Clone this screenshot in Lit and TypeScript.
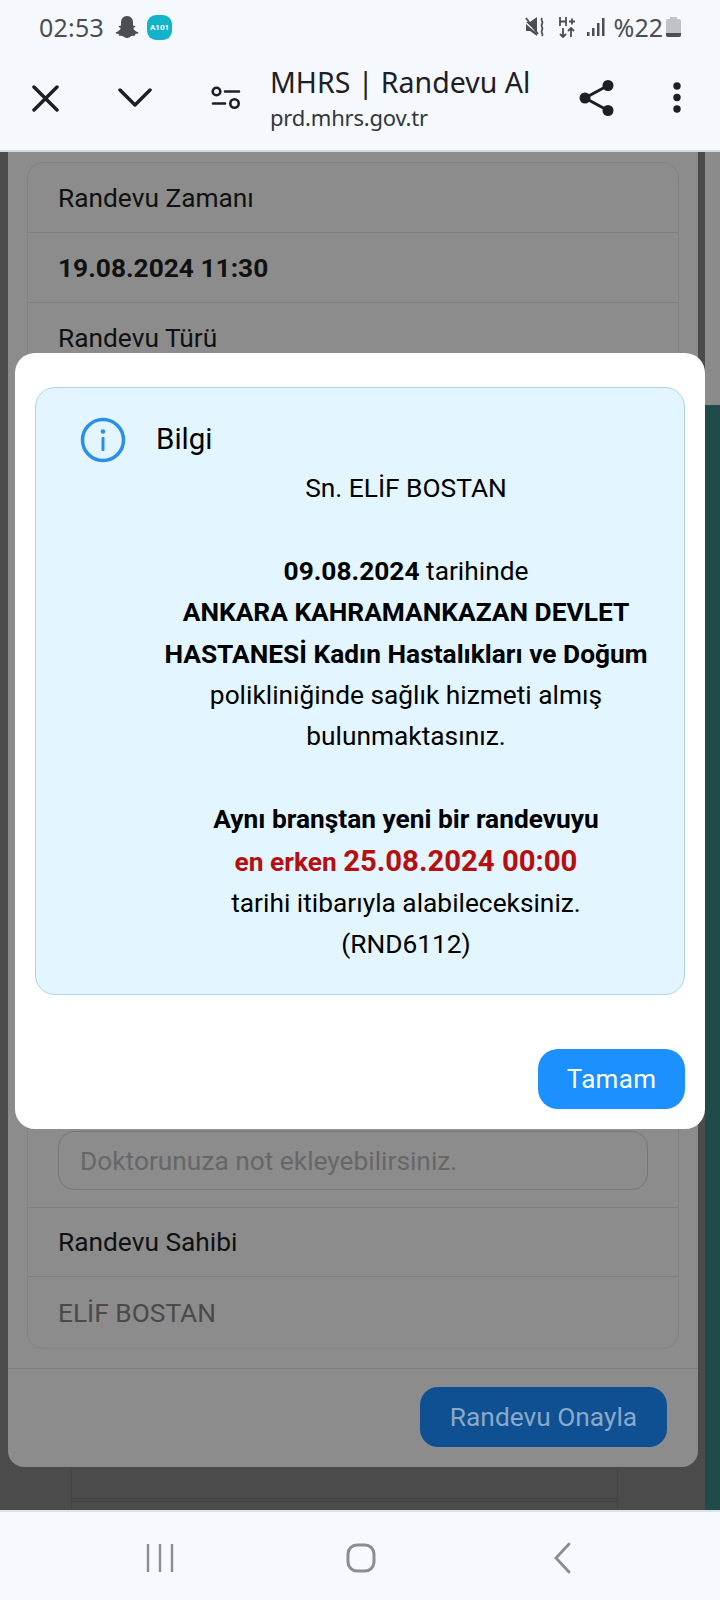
import { LitElement, html, css } from "lit";
import { customElement } from "lit/decorators.js";

@customElement("app-root")
export class AppRoot extends LitElement {
  static styles = css`
    :host { display: block; width: 720px; height: 1600px; position: relative; overflow: hidden; font-family: Roboto, "Liberation Sans", sans-serif; color: #000; }
    * { box-sizing: border-box; }
    .page { height: 1600px; display: flex; flex-direction: column; }
    .top { height: 152px; flex: none; background: #f5f9fe; border-bottom: 2px solid #d9d9d9; padding-top: 11px; }
    .status { height: 32px; display: flex; align-items: center; padding: 0 39px 0 39px; color: #4b4f54; font-family: "Noto Sans", sans-serif; font-size: 25px; }
    .status .time { width: 76px; letter-spacing: .2px; }
    .status svg { display: block; flex: none; }
    .status .grow { flex: 1; }
    .badge { width: 25px; height: 25px; margin-left: 8px; border-radius: 9px; background: #12b3cb; color: #fff; font: 700 8px Roboto, sans-serif; display: flex; align-items: center; justify-content: center; }
    .pct { margin: 0 3px 0 9px; }
    .tool { height: 80px; margin-top: 15px; display: flex; align-items: center; color: #1c2026; }
    .tool svg { display: block; flex: none; }
    .titles { margin-left: 29px; width: 301px; font-family: "Noto Sans", sans-serif; }
    .title { font-size: 28.5px; line-height: 38px; white-space: nowrap; }
    .url { font-size: 22px; line-height: 33px; color: #33373c; white-space: nowrap; letter-spacing: -.2px; }

    .stage { flex: 1; display: flex; background: #4b4b4b; position: relative; overflow: hidden; }
    .under { position: absolute; left: 71px; width: 547px; top: 1240px; bottom: 0; border: 1px solid #444; border-width: 0 1px; }
    .under .text { position: absolute; left: 35px; top: 50px; font-size: 26px; color: #000; }
    .under .rule { position: absolute; left: 0; right: 0; top: 106px; height: 4px; border: 1px solid #3f3f3f; border-width: 1px 0; }
    .sheet { position: relative; margin-left: 8px; width: 690px; height: 1315px; flex: none; background: #8c8c8c; border-radius: 0 0 16px 16px; display: flex; flex-direction: column; }
    .side { position: relative; margin-left: 7px; flex: 1; display: flex; flex-direction: column; }
    .side .g { height: 253px; background: #8b8b8b; }
    .side .t { flex: 1; background: #1f4b4b; }
    .list { margin: 10px 19px 0 19px; flex: 1; border: 1px solid #828282; border-radius: 16px; display: flex; flex-direction: column; }
    .row { height: 70px; flex: none; padding-left: 30px; display: flex; align-items: center; font-size: 26.3px; color: #111; border-bottom: 1px solid #7e7e7e; }
    .row.bold { font-weight: 700; }
    .row.muted { color: #4a4a4a; border-bottom: 0; height: 71px; }
    .row.hidden { flex: 1; height: auto; }
    .row.owner { height: 69px; }
    .note { height: 92px; flex: none; padding: 0 30px 17px 30px; border-bottom: 1px solid #7e7e7e; display: flex; align-items: flex-end; }
    .input { width: 100%; height: 59px; border: 1px solid #767676; border-radius: 16px; padding-left: 21px; display: flex; align-items: center; font-size: 26.3px; color: #676767; }
    .foot { height: 99px; margin-top: 19px; border-top: 1px solid #7e7e7e; flex: none; display: flex; justify-content: flex-end; padding: 18px 31px 0 0; }
    .confirm { width: 247px; height: 60px; border-radius: 18px; background: #0e5091; color: #8aa9c8; display: flex; align-items: center; justify-content: center; font-size: 26.3px; }

    .nav { height: 90px; flex: none; background: #f6f9fe; border-top: 2px solid #dfe2e7; display: flex; align-items: center; padding: 4px 0 0 146px; }
    .nav svg { display: block; flex: none; }
    .home { margin-left: 172px; }
    .back { margin-left: 177px; }

    .modal { position: absolute; left: 15px; top: 353px; width: 690px; height: 776px; background: #fff; border-radius: 20px; padding: 34px 20px 20px 20px; display: flex; flex-direction: column; }
    .alert { height: 608px; flex: none; background: #e3f5fe; border: 1px solid #aed6e6; border-radius: 20px; display: flex; padding: 29px 0 0 44px; }
    .alert svg { display: block; flex: none; }
    .body { margin-left: 30px; flex: 1; font-size: 26.3px; }
    .head { font-size: 29.5px; line-height: 42px; margin-top: 1px; }
    .msg { width: 500px; text-align: center; line-height: 41.4px; margin-top: 8px; }
    .msg b { font-weight: 700; }
    .msg .red { color: #b50f0f; font-weight: 700; }
    .msg .big { font-size: 29.3px; }
    .actions { display: flex; justify-content: flex-end; margin-top: 54px; }
    .ok { width: 147px; height: 60px; border-radius: 20px; background: #1c90ff; color: #fff; font-size: 26px; display: flex; align-items: center; justify-content: center; letter-spacing: .3px; }
  `;

  render() {
    return html`
      <div class="page">
        <div class="top">
          <div class="status">
            <span class="time">02:53</span>
            <svg width="24" height="26" viewBox="0 0 24 26"><path fill="#4b4f54" d="M12 2c4 0 6 3 6 6.500v3l2 .6c.6.3.3 1-.3 1.200l-1.400.6c.6 2 2.200 3.500 4.700 4.300.7.300.4 1-.3 1.300l-2.300.6-.6 1.700c-2-.3-3.600 0-5 1.100-1 .8-1.900 1-2.800 1s-1.800-.2-2.800-1c-1.400-1.100-3-1.400-5-1.100l-.6-1.700-2.300-.6c-.7-.3-1-1-.3-1.300 2.500-.8 4.100-2.300 4.700-4.300l-1.400-.6c-.6-.2-.9-.9-.3-1.200l2-.6v-3C6 5 8 2 12 2z"/></svg>
            <span class="badge">A101</span>
            <span class="grow"></span>
            <svg width="22" height="22" viewBox="0 0 22 22"><path fill="#4b4f54" d="M1 6h4l7-5v15zM1 8v7h4l7 5v-2.500z"/><path fill="none" stroke="#4b4f54" stroke-width="1.800" d="M1 2l12 16"/><path fill="none" stroke="#4b4f54" stroke-width="1.800" d="M17 2c-2 3 2 3 0 6s2 3 0 6 2 3 0 6"/></svg>
            <svg style="margin-left:12px" width="16" height="22" viewBox="0 0 16 22"><path fill="none" stroke="#4b4f54" stroke-width="1.800" d="M1 1v9M7 1v9M1 5.500h6M10 5.500h6M13 2.500v6M4 21v-9M1 18l3 3 3-3M12 21v-9M9 15l3-3 3 3"/></svg>
            <svg style="margin-left:12px" width="18" height="20" viewBox="0 0 18 20"><path fill="#4b4f54" d="M0 15h2.500v4H0zM5 11h2.500v8H5zM10 6h2.500v13H10zM15 1h2.500v18H15z"/></svg>
            <span class="pct">%22</span>
            <svg width="15" height="20" viewBox="0 0 15 20"><rect y="2" width="15" height="18" rx="2" fill="#bfc3c8"/><rect x="4" width="7" height="3" fill="#bfc3c8"/><path d="M0 16h15v2a2 2 0 0 1-2 2H2a2 2 0 0 1-2-2z" fill="#4b4f54"/></svg>
          </div>
          <div class="tool">
            <svg style="margin-left:32px" width="27" height="27" viewBox="0 0 27 27"><path fill="none" stroke="#1c2026" stroke-width="3.500" stroke-linecap="round" d="M2 2l23 23M25 2L2 25"/></svg>
            <svg style="margin-left:59px" width="34" height="20" viewBox="0 0 34 20"><path fill="none" stroke="#1c2026" stroke-width="3.500" stroke-linecap="round" stroke-linejoin="round" d="M2 2l15 15L32 2"/></svg>
            <svg style="margin-left:59px" width="30" height="24" viewBox="0 0 30 24"><g fill="none" stroke="#1c2026" stroke-width="2.600" stroke-linecap="round"><circle cx="5.500" cy="5.500" r="3.800"/><circle cx="23.500" cy="17.500" r="4.200"/><path d="M14 5.500h14M2 17.500h12"/></g></svg>
            <div class="titles">
              <div class="title">MHRS | Randevu Al</div>
              <div class="url">prd.mhrs.gov.tr</div>
            </div>
            <svg style="margin-left:8px" width="36" height="36" viewBox="0 0 36 36"><g fill="#1c2026"><circle cx="6" cy="18" r="5.500"/><circle cx="29" cy="5.500" r="5.500"/><circle cx="29" cy="30.500" r="5.500"/></g><path fill="none" stroke="#1c2026" stroke-width="3" d="M29 5.500L6 18l23 12.500"/></svg>
            <svg style="margin-left:58px" width="8" height="32" viewBox="0 0 8 32"><g fill="#1c2026"><circle cx="4" cy="4" r="3.700"/><circle cx="4" cy="15.500" r="3.700"/><circle cx="4" cy="27" r="3.700"/></g></svg>
          </div>
        </div>

        <div class="stage">
          <div class="under">
            <div class="text">› 14:00</div>
            <div class="rule"></div>
          </div>
          <div class="sheet">
            <div class="list">
              <div class="row">Randevu Zamanı</div>
              <div class="row bold">19.08.2024 11:30</div>
              <div class="row">Randevu Türü</div>
              <div class="row hidden"></div>
              <div class="note"><div class="input">Doktorunuza not ekleyebilirsiniz.</div></div>
              <div class="row owner">Randevu Sahibi</div>
              <div class="row muted">ELİF BOSTAN</div>
            </div>
            <div class="foot"><div class="confirm">Randevu Onayla</div></div>
          </div>
          <div class="side"><div class="g"></div><div class="t"></div></div>
        </div>

        <div class="nav">
          <svg width="28" height="28" viewBox="0 0 28 28"><path fill="none" stroke="#8a8d91" stroke-width="2.400" d="M2 0v28M14 0v28M26 0v28"/></svg>
          <svg class="home" width="30" height="30" viewBox="0 0 30 30"><rect x="2" y="2" width="26" height="26" rx="9" fill="none" stroke="#8a8d91" stroke-width="3"/></svg>
          <svg class="back" width="20" height="32" viewBox="0 0 20 32"><path fill="none" stroke="#8a8d91" stroke-width="2.800" stroke-linecap="round" d="M16 2L3 16l13 14"/></svg>
        </div>
      </div>

      <div class="modal">
        <div class="alert">
          <svg width="46" height="46" viewBox="0 0 46 46"><circle cx="23" cy="23" r="20.500" fill="none" stroke="#2a8fe8" stroke-width="3.500"/><circle cx="23" cy="14.500" r="2.300" fill="#2a8fe8"/><rect x="21.500" y="20" width="3" height="14" rx="1" fill="#2a8fe8"/></svg>
          <div class="body">
            <div class="head">Bilgi</div>
            <div class="msg">
              Sn. ELİF BOSTAN<br><br>
              <b>09.08.2024</b> tarihinde<br>
              <b>ANKARA KAHRAMANKAZAN DEVLET HASTANESİ Kadın Hastalıkları ve Doğum</b><br>
              polikliniğinde sağlık hizmeti almış bulunmaktasınız.<br><br>
              <b>Aynı branştan yeni bir randevuyu</b><br>
              <span class="red">en erken <span class="big">25.08.2024 00:00</span></span><br>
              tarihi itibarıyla alabileceksiniz.<br>
              (RND6112)
            </div>
          </div>
        </div>
        <div class="actions"><div class="ok">Tamam</div></div>
      </div>
    `;
  }
}
